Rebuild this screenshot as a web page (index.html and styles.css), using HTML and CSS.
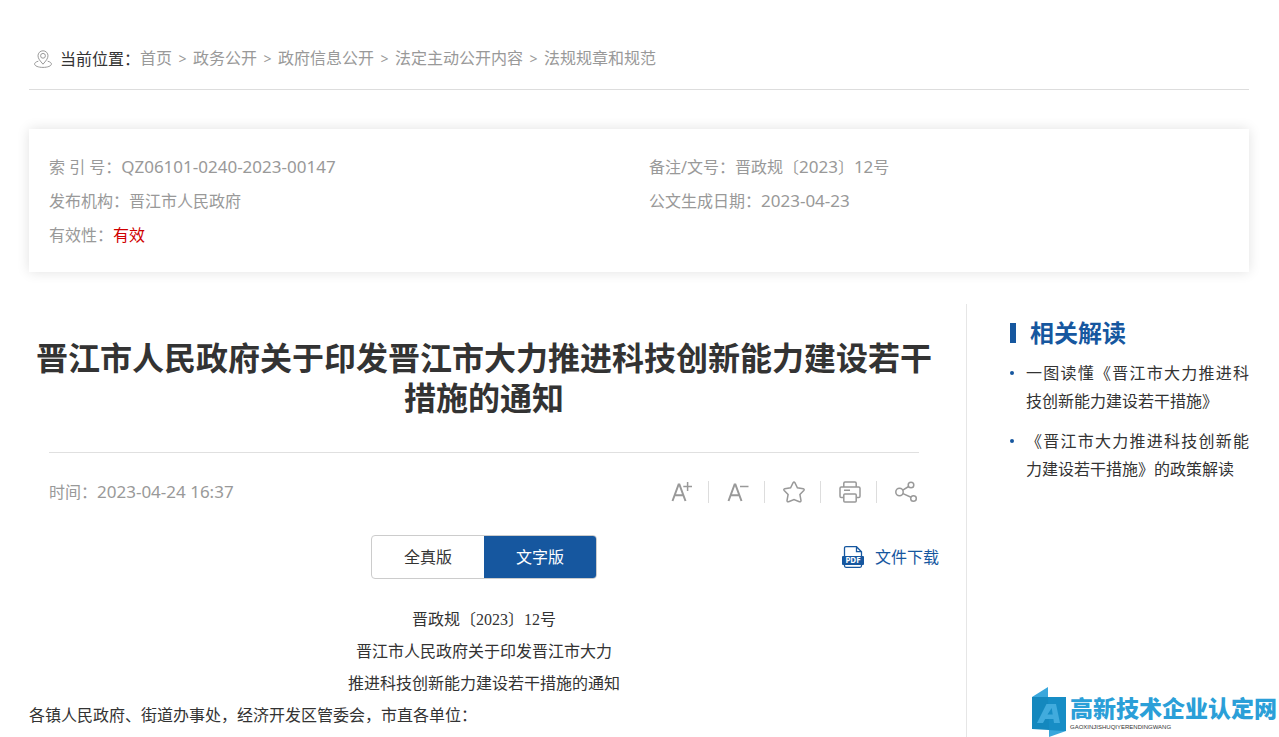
FILE: index.html
```
<!DOCTYPE html>
<html lang="zh-CN">
<head>
<meta charset="utf-8">
<title>晋江市人民政府关于印发晋江市大力推进科技创新能力建设若干措施的通知</title>
<link rel="stylesheet" href="styles.css">
</head>
<body>
<div class="page">
  <nav class="crumbs" aria-label="当前位置">
    <svg class="crumbs-icon" viewBox="0 0 18 18" aria-hidden="true">
      <path d="M9 14.2C6.2 11 4 8.500 4 5.800a5 5 0 0 1 10 0C14 8.500 11.800 11 9 14.200z"/>
      <circle cx="9" cy="5.800" r="2.400"/>
      <path d="M4.300 11.200C1.800 11.800.600 12.900.600 14c0 2 3.800 3.400 8.400 3.400s8.400-1.400 8.400-3.400c0-1.100-1.200-2.200-3.700-2.800"/>
    </svg>
    <span class="crumbs-label">当前位置：</span>
    <ol class="crumbs-list">
      <li><a href="#">首页</a></li>
      <li><a href="#">政务公开</a></li>
      <li><a href="#">政府信息公开</a></li>
      <li><a href="#">法定主动公开内容</a></li>
      <li><a href="#">法规规章和规范</a></li>
    </ol>
  </nav>

  <dl class="info">
    <div class="info-item"><dt>索 引 号：</dt><dd class="num">QZ06101-0240-2023-00147</dd></div>
    <div class="info-item"><dt>备注/文号：</dt><dd>晋政规〔<span class="num">2023</span>〕<span class="num">12</span>号</dd></div>
    <div class="info-item"><dt>发布机构：</dt><dd>晋江市人民政府</dd></div>
    <div class="info-item"><dt>公文生成日期：</dt><dd class="num">2023-04-23</dd></div>
    <div class="info-item"><dt>有效性：</dt><dd class="valid">有效</dd></div>
  </dl>

  <div class="columns">
    <main class="article">
      <h1 class="title">晋江市人民政府关于印发晋江市大力推进科技创新能力建设若干措施的通知</h1>
      <div class="meta">
        <p class="time">时间：<span class="num">2023-04-24 16:37</span></p>
        <div class="tools">
          <button class="tool" type="button" aria-label="放大字号"><svg viewBox="0 0 22 22"><path class="thick" d="M1.500 20 7.600 3.500h.800L14.500 20M3.800 14.200h8.500"/><path d="M12.300 5.500h8.700M16.600 1v9"/></svg></button>
          <button class="tool" type="button" aria-label="缩小字号"><svg viewBox="0 0 22 22"><path class="thick" d="M1.500 20 7.600 3.500h.800L14.500 20M3.800 14.200h8.500"/><path d="M13 5.500h8.500"/></svg></button>
          <button class="tool" type="button" aria-label="收藏"><svg viewBox="0 0 22 22"><path d="M10.100 1.700Q11 .500 11.900 1.700L14.400 6.800 20.200 7.700Q21.800 8.200 20.800 9.400L16.900 13.500 18 19.500Q18 21.300 16.400 20.700L11 18.500 5.600 20.700Q4 21.300 4 19.500L5.100 13.500 1.200 9.400Q.200 8.200 1.800 7.700L7.600 6.800z"/></svg></button>
          <button class="tool" type="button" aria-label="打印"><svg viewBox="0 0 22 22"><path d="M4.800 5.800V2.200Q4.800 1 6 1h10q1.200 0 1.200 1.200v3.600M4.500 16.500H2.300Q1 16.500 1 15.200V7.300Q1 6 2.300 6h17.400Q21 6 21 7.300v7.900q0 1.300-1.300 1.300h-2.200M5 9.300h6"/><rect x="4.800" y="13" width="12.400" height="8" rx="1"/></svg></button>
          <button class="tool" type="button" aria-label="分享"><svg viewBox="0 0 22 22"><circle cx="4.500" cy="11" r="3.700"/><circle cx="16" cy="4" r="2.800"/><circle cx="18.500" cy="17.500" r="2.800"/><path d="M7.800 9.200 13.600 5.500M8 12.600l8 3.600"/></svg></button>
        </div>
      </div>
      <div class="versions">
        <div class="tabs">
          <button class="tab" type="button">全真版</button>
          <button class="tab tab-active" type="button" aria-pressed="true">文字版</button>
        </div>
        <a class="download" href="#">
          <svg class="download-icon" viewBox="0 0 22 22" aria-hidden="true">
            <path class="sheet" d="M2.500 11V2.200Q2.500.700 4 .700h10.500l5 5V11M2.500 19v.800q0 1.500 1.500 1.500h14q1.500 0 1.500-1.500V19M14.500.700v5h5"/>
            <rect class="band" x="0" y="10" width="22" height="9" rx="1"/>
            <text class="pdf" x="11" y="17.300" text-anchor="middle">PDF</text>
          </svg>
          <span>文件下载</span>
        </a>
      </div>
      <div class="body">
        <p class="center">晋政规〔2023〕12号</p>
        <p class="center">晋江市人民政府关于印发晋江市大力</p>
        <p class="center">推进科技创新能力建设若干措施的通知</p>
        <p>各镇人民政府、街道办事处，经济开发区管委会，市直各单位：</p>
      </div>
    </main>
    <aside class="side">
      <h2 class="side-title">相关解读</h2>
      <ul class="side-list">
        <li><a href="#">一图读懂《晋江市大力推进科技创新能力建设若干措施》</a></li>
        <li><a href="#">《晋江市大力推进科技创新能力建设若干措施》的政策解读</a></li>
      </ul>
    </aside>
  </div>
  <div class="brand">
    <svg class="brand-mark" viewBox="0 0 36 50" aria-hidden="true">
      <path fill="#3aa7dc" d="M1 10 17 0v10zM18 40h17v4L18 50z"/>
      <path fill="#1488be" d="M1 10h34v34l-17-1-17-1z"/>
      <path fill="#1c97cf" d="M17 10h18v34l-17-1z" opacity=".4"/>
      <path fill="#41abdd" fill-rule="evenodd" d="M6 36 15.500 17H25l4 19h-6l-.6-4h-8.200L12 36zM16.500 27.500h5.200L20.700 21z"/>
    </svg>
    <div class="brand-text">
      <p class="brand-name">高新技术企业认定网</p>
      <p class="brand-sub">GAOXINJISHUQIYERENDINGWANG</p>
    </div>
  </div>
</div>
</body>
</html>
```
FILE: styles.css
```
* {
  box-sizing: border-box;
  margin: 0;
  padding: 0;
}

body {
  background: #fff;
  color: #333;
  font-family: "Noto Sans", "Noto Sans CJK SC", sans-serif;
  font-size: 16px;
  line-height: 24px;
  text-spacing-trim: space-all;
}

a {
  color: inherit;
  text-decoration: none;
}

ol,
ul {
  list-style: none;
}

svg {
  display: block;
}

button {
  border: 0;
  background: none;
  color: inherit;
  font: inherit;
  cursor: pointer;
}

.page {
  position: relative;
  display: flex;
  flex-direction: column;
  min-height: 100vh;
  padding: 28px 30px 0 29px;
}

.num {
  font-size: 17px;
  font-weight: 300;
}

.crumbs {
  display: flex;
  align-items: center;
  height: 62px;
  padding-left: 5px;
  border-bottom: 1px solid #ddd;
}

.crumbs-icon {
  width: 18px;
  height: 18px;
  margin-right: 8px;
  fill: none;
  stroke: #999;
}

.crumbs-list {
  display: flex;
  color: #999;
}

.crumbs-list li + li::before {
  content: ">";
  display: inline-block;
  width: 21px;
  font-size: 14px;
  text-align: center;
}

.info {
  display: grid;
  grid-template-columns: 600px 1fr;
  margin-top: 39px;
  padding: 21px 20px 20px;
  background: #fff;
  box-shadow: 0 0 12px rgba(0, 0, 0, 0.12);
  color: #999;
  line-height: 34px;
}

.info .num,
.time .num {
  font-weight: 400;
}

.info-item {
  display: flex;
  height: 34px;
}

.valid {
  color: #d00000;
}

.columns {
  flex: 1;
  display: flex;
  margin-top: 32px;
}

.article {
  flex: 1;
  padding-right: 27px;
  border-right: 1px solid #e6e6e6;
}

.title {
  padding: 34px 0;
  font-size: 32px;
  font-weight: 700;
  line-height: 40px;
  text-align: center;
}

.meta {
  display: flex;
  align-items: center;
  justify-content: space-between;
  height: 79px;
  margin: 0 20px;
  border-top: 1px solid #e0e0e0;
  color: #999;
}

.tools {
  display: flex;
  padding-right: 2px;
}

.tool {
  width: 22px;
}

.tool + .tool {
  width: 41px;
  margin-left: 15px;
  padding-left: 18px;
  border-left: 1px solid #ddd;
}

.tool svg {
  width: 22px;
  height: 22px;
  fill: none;
  stroke: #999;
  stroke-width: 1.5;
}

.tool .thick {
  stroke-width: 2;
}

.versions {
  display: grid;
  grid-template-columns: 1fr auto 1fr;
  align-items: center;
  padding-top: 4px;
}

.tabs {
  grid-column: 2;
  display: flex;
  border: 1px solid #ccc;
  border-radius: 4px;
  overflow: hidden;
}

.tab {
  padding: 9px 32px;
}

.tab-active {
  background: #16579f;
  color: #fff;
}

.download {
  justify-self: end;
  display: flex;
  align-items: center;
  gap: 11px;
  color: #16579f;
}

.download-icon {
  width: 22px;
  height: 22px;
}

.sheet {
  fill: none;
  stroke: #16579f;
  stroke-width: 1.3;
}

.band {
  fill: #16579f;
}

.pdf {
  fill: #fff;
  font-family: "Noto Sans", sans-serif;
  font-size: 8px;
  font-weight: 700;
}

.body {
  padding-top: 25px;
  font-family: "Liberation Serif", "Noto Sans CJK SC", serif;
  line-height: 32px;
}

.center {
  text-align: center;
}

.side {
  width: 282px;
  padding: 11px 0 0 43px;
}

.side-title {
  display: flex;
  align-items: center;
  gap: 14px;
  color: #16579f;
  font-size: 24px;
  font-weight: 700;
  line-height: 36px;
}

.side-title::before {
  content: "";
  width: 6px;
  height: 20px;
  background: #16579f;
}

.side-list {
  display: grid;
  gap: 12px;
  padding-top: 8px;
  line-height: 28px;
}

.side-list li {
  display: flex;
  align-items: flex-start;
  gap: 12px;
  text-align: justify;
}

.side-list li::before {
  content: "";
  flex: none;
  width: 4px;
  height: 4px;
  margin-top: 12px;
  border-radius: 50%;
  background: #16579f;
}

.brand {
  position: absolute;
  right: 2px;
  bottom: 0;
  display: flex;
  align-items: center;
  gap: 3px;
}

.brand-mark {
  width: 36px;
  height: 50px;
}

.brand-text {
  padding-top: 2px;
}

.brand-name {
  color: #2b9fd8;
  font-size: 23px;
  font-weight: 900;
  line-height: 26px;
}

.brand-sub {
  padding-top: 2px;
  color: #333;
  font-family: "Liberation Sans", sans-serif;
  font-size: 6px;
  line-height: 8px;
}
```
